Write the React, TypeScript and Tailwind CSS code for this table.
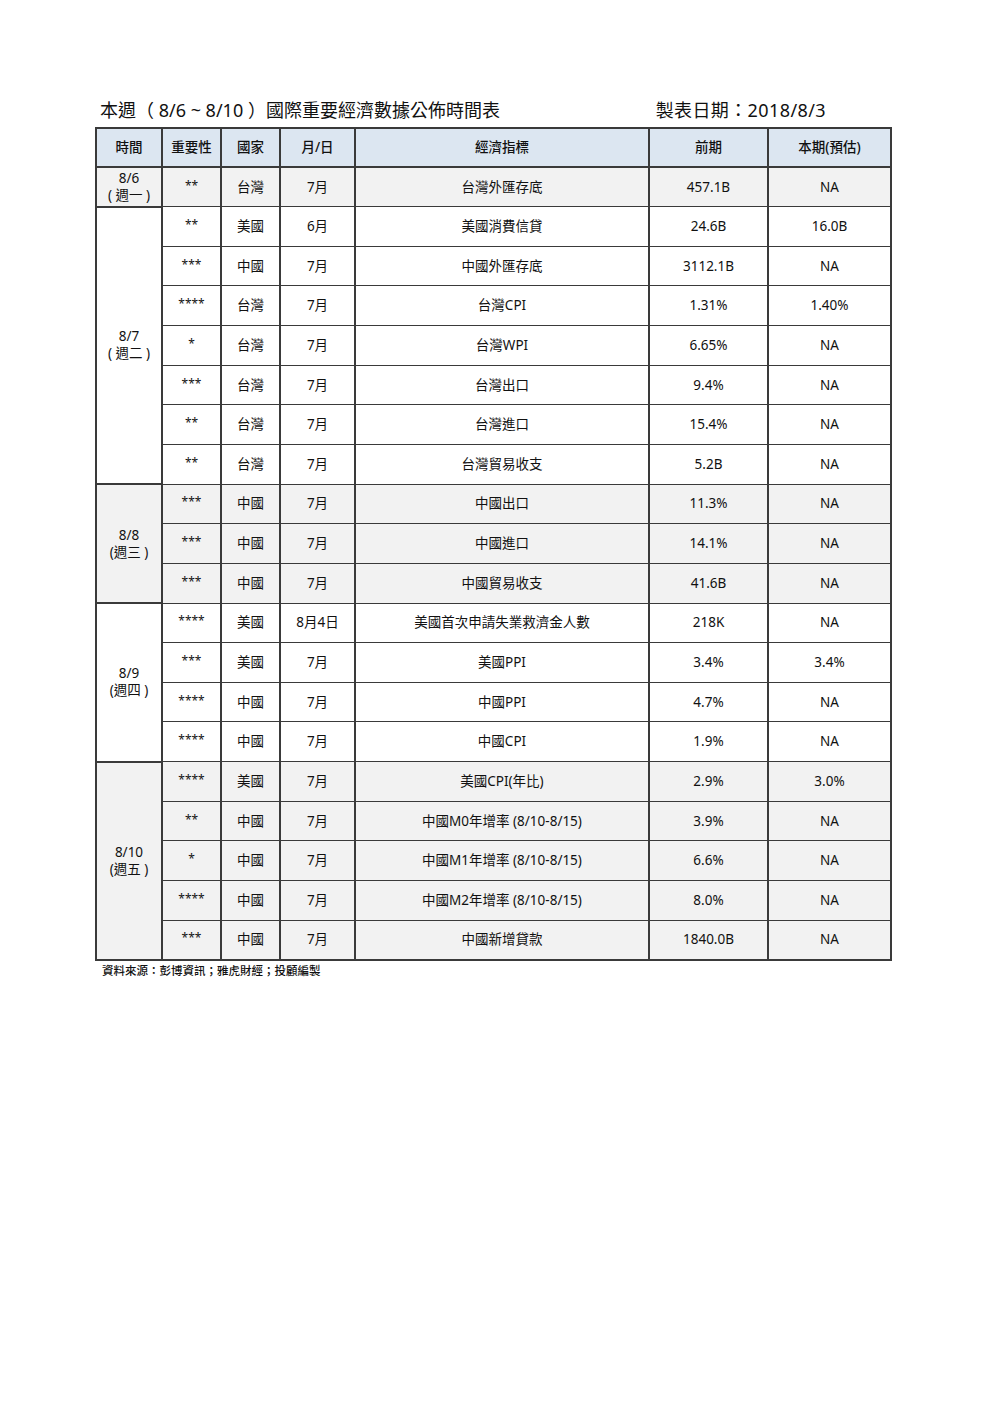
import React from "react";

type Row = [string, string, string, string, string, string];

const groups: { day: string; week: string; gray: boolean; rows: Row[] }[] = [
  { day: "8/6", week: "( 週一 )", gray: true, rows: [["**", "台灣", "7月", "台灣外匯存底", "457.1B", "NA"]] },
  {
    day: "8/7",
    week: "( 週二 )",
    gray: false,
    rows: [
      ["**", "美國", "6月", "美國消費信貸", "24.6B", "16.0B"],
      ["***", "中國", "7月", "中國外匯存底", "3112.1B", "NA"],
      ["****", "台灣", "7月", "台灣CPI", "1.31%", "1.40%"],
      ["*", "台灣", "7月", "台灣WPI", "6.65%", "NA"],
      ["***", "台灣", "7月", "台灣出口", "9.4%", "NA"],
      ["**", "台灣", "7月", "台灣進口", "15.4%", "NA"],
      ["**", "台灣", "7月", "台灣貿易收支", "5.2B", "NA"],
    ],
  },
  {
    day: "8/8",
    week: "(週三 )",
    gray: true,
    rows: [
      ["***", "中國", "7月", "中國出口", "11.3%", "NA"],
      ["***", "中國", "7月", "中國進口", "14.1%", "NA"],
      ["***", "中國", "7月", "中國貿易收支", "41.6B", "NA"],
    ],
  },
  {
    day: "8/9",
    week: "(週四 )",
    gray: false,
    rows: [
      ["****", "美國", "8月4日", "美國首次申請失業救濟金人數", "218K", "NA"],
      ["***", "美國", "7月", "美國PPI", "3.4%", "3.4%"],
      ["****", "中國", "7月", "中國PPI", "4.7%", "NA"],
      ["****", "中國", "7月", "中國CPI", "1.9%", "NA"],
    ],
  },
  {
    day: "8/10",
    week: "(週五 )",
    gray: true,
    rows: [
      ["****", "美國", "7月", "美國CPI(年比)", "2.9%", "3.0%"],
      ["**", "中國", "7月", "中國M0年增率 (8/10-8/15)", "3.9%", "NA"],
      ["*", "中國", "7月", "中國M1年增率 (8/10-8/15)", "6.6%", "NA"],
      ["****", "中國", "7月", "中國M2年增率 (8/10-8/15)", "8.0%", "NA"],
      ["***", "中國", "7月", "中國新增貸款", "1840.0B", "NA"],
    ],
  },
];

const headers = ["時間", "重要性", "國家", "月/日", "經濟指標", "前期", "本期(預估)"];

export default function App() {
  return (
    <div className="min-h-[1403px] w-[992px] bg-white font-['Noto_Sans','Noto_Sans_CJK_TC',sans-serif] text-[#111]">
      <div className="pl-[95px] pt-[98px] w-[890px]">
        <div className="flex items-end justify-between pl-[5px] pr-[64px] pb-[5px] text-[18px] leading-[24px]">
          <span>本週（ 8/6 ~ 8/10 ）國際重要經濟數據公佈時間表</span>
          <span className="tracking-[0.4px]">製表日期：2018/8/3</span>
        </div>
        <table className="w-[795px] table-fixed border-collapse border-2 border-[#3a3a3a] text-[13.5px]">
          <colgroup>
            <col className="w-[66px]" />
            <col className="w-[59px]" />
            <col className="w-[59px]" />
            <col className="w-[75px]" />
            <col className="w-[294px]" />
            <col className="w-[119px]" />
            <col className="w-[123px]" />
          </colgroup>
          <thead>
            <tr className="h-[39px] bg-[#dce6f1]">
              {headers.map((h) => (
                <th key={h} className="border-2 border-[#3a3a3a] p-0 text-center font-medium leading-[17px]">
                  {h}
                </th>
              ))}
            </tr>
          </thead>
          <tbody>
            {groups.map((g) =>
              g.rows.map((r, i) => (
                <tr key={g.day + i} className={`h-[39.65px] ${g.gray ? "bg-[#f2f2f2]" : "bg-white"}`}>
                  {i === 0 && (
                    <td
                      rowSpan={g.rows.length}
                      className="border-2 border-[#3a3a3a] p-0 text-center align-middle leading-[17px]"
                    >
                      <div>{g.day}</div>
                      <div>{g.week}</div>
                    </td>
                  )}
                  {r.map((c, j) => (
                    <td
                      key={j}
                      className={`border-x-2 border-y-[1.5px] border-[#3a3a3a] p-0 text-center align-middle leading-[17px] ${
                        j === 0 ? "text-[12px] pb-[4px]" : ""
                      }`}
                    >
                      {c}
                    </td>
                  ))}
                </tr>
              ))
            )}
          </tbody>
        </table>
        <div className="pl-[7px] pt-[2px] text-[11.5px] leading-[16px] font-medium">
          資料來源：彭博資訊；雅虎財經；投顧編製
        </div>
      </div>
    </div>
  );
}
